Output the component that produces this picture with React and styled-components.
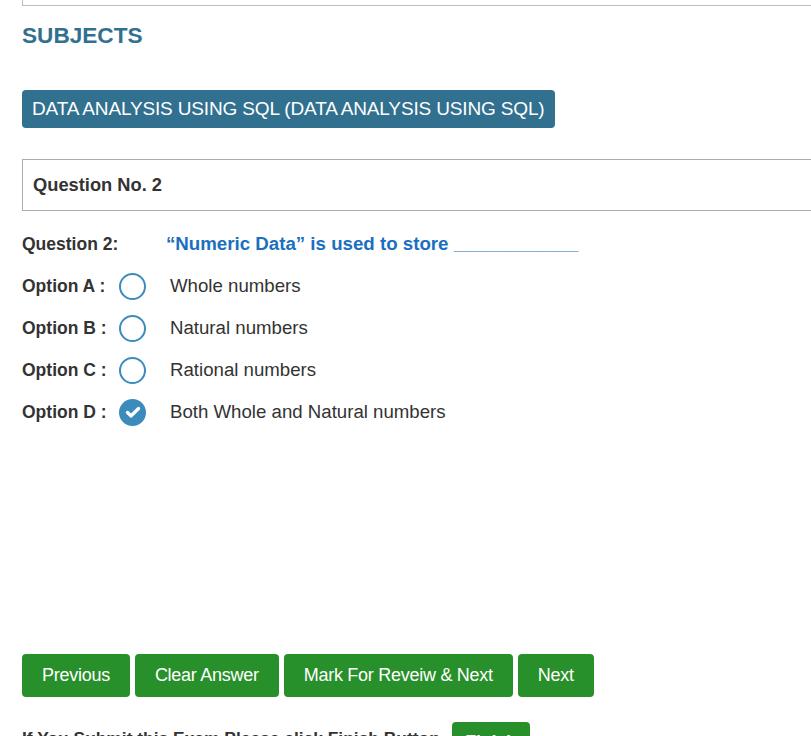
import React from "react";
import styled, { createGlobalStyle } from "styled-components";

const Global = createGlobalStyle`
  html, body { margin: 0; padding: 0; overflow: hidden; background: #fff; }
  body { font-family: "Liberation Sans", Arial, sans-serif; color: #333; }
`;

const Page = styled.div`
  padding: 0 0 0 22px;
  width: 900px;
`;

const TopPanel = styled.div`
  height: 60px;
  margin-top: -55px;
  border: 1px solid #bdbdbd;
  border-top: none;
`;

const Heading = styled.h3`
  margin: 16px 0 0;
  font-size: 22.6px;
  font-weight: bold;
  color: #31708f;
  line-height: 28px;
`;

const SubjectBadge = styled.div`
  display: inline-block;
  margin-top: 40px;
  padding: 0 10px;
  height: 38px;
  line-height: 38px;
  background: #31708f;
  color: #fff;
  font-size: 19px;
  border-radius: 4px;
  letter-spacing: -0.15px;
`;

const QuestionBox = styled.div`
  margin-top: 31px;
  border: 1px solid #ababab;
  height: 50px;
  display: flex;
  align-items: center;
  padding-left: 10px;
  font-size: 18.3px;
  font-weight: bold;
  color: #333;
`;

const QuestionRow = styled.div`
  display: flex;
  align-items: center;
  margin-top: 22px;
  height: 22px;
`;

const QLabel = styled.div`
  width: 144px;
  font-size: 17.5px;
  font-weight: bold;
  color: #333;
`;

const QText = styled.div`
  font-size: 18.7px;
  font-weight: bold;
  color: #1a6fbf;
`;

const OptionList = styled.div`
  display: flex;
  flex-direction: column;
  margin-top: 10px;
`;

const OptionRow = styled.div`
  display: flex;
  align-items: center;
  height: 42px;
`;

const OLabel = styled.div`
  width: 97px;
  font-size: 17.5px;
  font-weight: bold;
  color: #333;
`;

const Radio = styled.span`
  width: 27px;
  height: 27px;
  box-sizing: border-box;
  border-radius: 50%;
  border: ${(p) => (p.$checked ? "none" : "2px solid #3b8bbd")};
  background: ${(p) => (p.$checked ? "#3b8bbd" : "#fff")};
  display: flex;
  align-items: center;
  justify-content: center;
  margin-right: 24px;
`;

const OText = styled.div`
  font-size: 18.65px;
  color: #333;
`;

const ButtonBar = styled.div`
  display: flex;
  gap: 5px;
  margin-top: 221px;
`;

const Button = styled.button`
  height: 43px;
  padding: 0 20px;
  background: #28902a;
  color: #fff;
  border: none;
  border-radius: 4px;
  font-family: "Liberation Sans", Arial, sans-serif;
  font-size: 18px;
  letter-spacing: -0.27px;
`;

const FinishRow = styled.div`
  display: flex;
  align-items: flex-start;
  margin-top: 25px;
  gap: 12px;
`;

const FinishText = styled.div`
  font-size: 17.4px;
  font-weight: bold;
  color: #333;
  margin-top: 6px;
`;

const FinishButton = styled(Button)`
  height: 40px;
  padding: 0 13.5px;
  font-weight: bold;
`;

const Check = () => (
  <svg width="18" height="18" viewBox="0 0 18 18">
    <path d="M3.5 9.5l3.6 3.4L14.5 5.5" fill="none" stroke="#fff" strokeWidth="3.4" strokeLinecap="round" strokeLinejoin="round" />
  </svg>
);

const options = [
  ["Option A :", "Whole numbers", false],
  ["Option B :", "Natural numbers", false],
  ["Option C :", "Rational numbers", false],
  ["Option D :", "Both Whole and Natural numbers", true],
];

export default function App() {
  return (
    <>
      <Global />
      <Page>
        <TopPanel />
        <Heading>SUBJECTS</Heading>
        <SubjectBadge>DATA ANALYSIS USING SQL (DATA ANALYSIS USING SQL)</SubjectBadge>
        <QuestionBox>Question No. 2</QuestionBox>
        <QuestionRow>
          <QLabel>Question 2:</QLabel>
          <QText>“Numeric Data” is used to store ____________</QText>
        </QuestionRow>
        <OptionList>
          {options.map(([label, text, checked]) => (
            <OptionRow key={label}>
              <OLabel>{label}</OLabel>
              <Radio $checked={checked}>{checked && <Check />}</Radio>
              <OText>{text}</OText>
            </OptionRow>
          ))}
        </OptionList>
        <ButtonBar>
          <Button>Previous</Button>
          <Button>Clear Answer</Button>
          <Button>Mark For Reveiw &amp; Next</Button>
          <Button>Next</Button>
        </ButtonBar>
        <FinishRow>
          <FinishText>If You Submit this Exam Please click Finish Button</FinishText>
          <FinishButton>Finish</FinishButton>
        </FinishRow>
      </Page>
    </>
  );
}
